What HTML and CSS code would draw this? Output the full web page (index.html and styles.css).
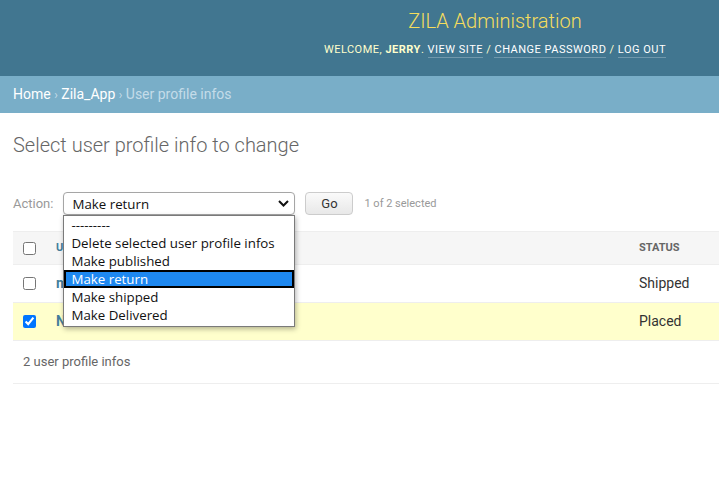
FILE: index.html
```html
<!DOCTYPE html>
<html lang="en">
<head>
<meta charset="utf-8">
<title>Select user profile info to change | ZILA Administration</title>
<link rel="stylesheet" href="styles.css">
</head>
<body>
<div class="page">
  <header class="header">
    <div class="branding-block">
      <h1 class="branding">ZILA Administration</h1>
      <div class="user-tools">Welcome, <strong>Jerry</strong>. <a href="#">View site</a> / <a href="#">Change password</a> / <a href="#">Log out</a></div>
    </div>
  </header>
  <nav class="breadcrumbs"><a href="#">Home</a> <span class="sep">›</span> <a href="#">Zila_App</a> <span class="sep">›</span> User profile infos</nav>
  <main class="content">
    <h1 class="page-title">Select user profile info to change</h1>
    <div class="actions">
      <label class="action-label">Action:</label>
      <div class="select-wrap">
        <div class="select">
          <span>Make return</span>
          <svg class="chevron" width="11" height="7" viewBox="0 0 11 7"><path d="M1 1 L5.5 5.5 L10 1" fill="none" stroke="#111" stroke-width="2"/></svg>
        </div>
        <ul class="dropdown">
          <li class="option">---------</li>
          <li class="option">Delete selected user profile infos</li>
          <li class="option">Make published</li>
          <li class="option option-active">Make return</li>
          <li class="option">Make shipped</li>
          <li class="option">Make Delivered</li>
        </ul>
      </div>
      <button class="go">Go</button>
      <span class="counter">1 of 2 selected</span>
    </div>
    <table class="result-list">
      <colgroup><col class="col-check"><col class="col-user"><col class="col-status"></colgroup>
      <thead>
        <tr>
          <th class="cell-check"><input type="checkbox"></th>
          <th><a href="#">User</a></th>
          <th>Status</th>
        </tr>
      </thead>
      <tbody>
        <tr>
          <td class="cell-check"><input type="checkbox"></td>
          <th class="row-link"><a href="#">mike</a></th>
          <td>Shipped</td>
        </tr>
        <tr class="selected">
          <td class="cell-check"><input type="checkbox" checked></td>
          <th class="row-link"><a href="#">Nina</a></th>
          <td>Placed</td>
        </tr>
      </tbody>
    </table>
    <p class="paginator">2 user profile infos</p>
  </main>
</div>
</body>
</html>
```

FILE: styles.css
```css
html, body {
  margin: 0;
  padding: 0;
  overflow: hidden;
  background: #fff;
}
body {
  font-family: Roboto, "Liberation Sans", sans-serif;
  color: #333;
  font-size: 14px;
}
.page {
  width: 719px;
  overflow: hidden;
}
.header {
  background: #417690;
  height: 76px;
  box-sizing: border-box;
  display: flex;
  justify-content: flex-end;
  padding: 8px 53px 0 0;
}
.branding-block {
  display: flex;
  flex-direction: column;
  align-items: center;
}
.branding {
  margin: 0;
  font-size: 20px;
  font-weight: 300;
  line-height: 26px;
  color: #f5dd5d;
}
.user-tools {
  margin-top: 8px;
  font-size: 11px;
  letter-spacing: 0.5px;
  text-transform: uppercase;
  color: #ffc;
  line-height: 16px;
}
.user-tools strong {
  font-weight: 700;
}
.user-tools a {
  color: #fff;
  text-decoration: none;
  border-bottom: 1px solid rgba(255, 255, 255, 0.25);
  padding-bottom: 1px;
}
.breadcrumbs {
  background: #79aec8;
  height: 37px;
  line-height: 37px;
  padding: 0 13px;
  font-size: 14px;
  color: #c4dce8;
}
.breadcrumbs a {
  color: #fff;
  text-decoration: none;
}
.breadcrumbs .sep {
  font-size: 12px;
}
.content {
  padding: 0 0 0 13px;
}
.page-title {
  margin: 20px 0 0;
  font-size: 20px;
  font-weight: 300;
  line-height: 24px;
  color: #666;
}
.actions {
  display: flex;
  align-items: center;
  margin: 35px 0 16px;
  height: 23px;
}
.action-label {
  font-size: 13px;
  color: #999;
  margin-right: 10px;
}
.select-wrap {
  position: relative;
}
.select {
  width: 232px;
  height: 23px;
  box-sizing: border-box;
  border: 1px solid #a6a6a6;
  border-radius: 4px;
  display: flex;
  align-items: center;
  justify-content: space-between;
  padding: 0 4px 0 8px;
  font-family: "Open Sans", "Noto Sans", sans-serif;
  font-size: 13.3px;
  color: #111;
  background: #fff;
  box-shadow: 0 1px 2px rgba(0,0,0,0.08);
}
.chevron {
  margin-right: 1px;
}
.dropdown {
  position: absolute;
  left: 0;
  top: 23px;
  width: 232px;
  box-sizing: border-box;
  margin: 0;
  padding: 0 0 2px;
  list-style: none;
  background: #fff;
  border: 1px solid #7a7a7a;
  box-shadow: 1px 2px 5px rgba(0,0,0,0.3);
  font-family: "Open Sans", "Noto Sans", sans-serif;
  font-size: 13.3px;
  color: #111;
  z-index: 5;
}
.option {
  height: 18px;
  line-height: 18px;
  padding: 0 7px;
  white-space: nowrap;
}
.option-active {
  background: #1e88f0;
  color: #fff;
  box-shadow: inset 0 0 0 2px #000;
}
.go {
  margin-left: 10px;
  width: 48px;
  height: 23px;
  border: 1px solid #ccc;
  border-radius: 4px;
  background: linear-gradient(#fafafa, #e8e8e8);
  font-family: Roboto, sans-serif;
  font-size: 13px;
  color: #333;
  padding: 0;
}
.counter {
  margin-left: 11px;
  font-size: 11px;
  color: #999;
}
.result-list {
  border-collapse: collapse;
  table-layout: fixed;
  width: 760px;
}
.col-check { width: 33px; }
.col-user { width: 583px; }
.col-status { width: 144px; }
.result-list thead th {
  background: #f6f6f6;
  border-top: 1px solid #eee;
  border-bottom: 1px solid #eee;
  padding: 8px 10px;
  text-align: left;
  font-size: 11px;
  font-weight: 700;
  text-transform: uppercase;
  color: #666;
  line-height: 16px;
}
.result-list thead th a {
  color: #447e9b;
  text-decoration: none;
}
.result-list td, .result-list .row-link {
  padding: 8px 10px;
  border-bottom: 1px solid #eee;
  text-align: left;
  line-height: 21px;
  font-size: 14px;
}
.row-link a {
  color: #447e9b;
  font-weight: 700;
  text-decoration: none;
}
.result-list tr.selected {
  background: #ffc;
}
.cell-check input {
  margin: 0;
  width: 13px;
  height: 13px;
  display: block;
}
.result-list thead .cell-check, .result-list .cell-check {
  padding-right: 0;
}
.paginator {
  margin: 0;
  padding: 10px;
  line-height: 22px;
  font-size: 13px;
  color: #666;
  border-bottom: 1px solid #eee;
}
```
